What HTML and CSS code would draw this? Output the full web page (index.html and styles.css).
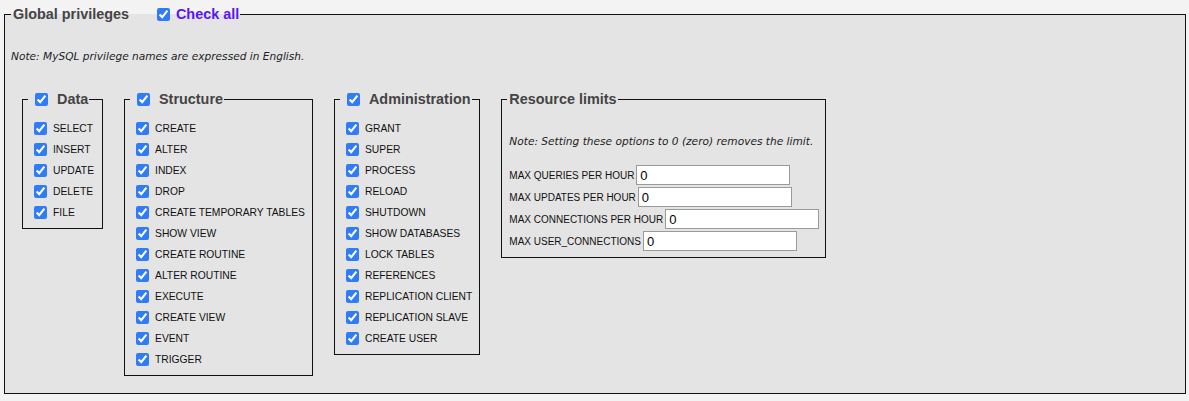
FILE: index.html
```html
<!DOCTYPE html>
<html>
<head>
<meta charset="utf-8">
<link rel="stylesheet" href="styles.css">
</head>
<body>
<fieldset class="outer">
  <legend class="outer-legend">Global privileges<input type="checkbox" class="cb check-all" checked><a class="check-all-link">Check all</a></legend>
  <p class="note">Note: MySQL privilege names are expressed in English.</p>
  <div class="groups">
    <fieldset class="group group-data">
      <legend class="group-legend"><input type="checkbox" class="cb" checked><span>Data</span></legend>
      <div class="items">
        <label class="item"><input type="checkbox" class="cb" checked>SELECT</label>
        <label class="item"><input type="checkbox" class="cb" checked>INSERT</label>
        <label class="item"><input type="checkbox" class="cb" checked>UPDATE</label>
        <label class="item"><input type="checkbox" class="cb" checked>DELETE</label>
        <label class="item"><input type="checkbox" class="cb" checked>FILE</label>
      </div>
    </fieldset>
    <fieldset class="group">
      <legend class="group-legend"><input type="checkbox" class="cb" checked><span>Structure</span></legend>
      <div class="items">
        <label class="item"><input type="checkbox" class="cb" checked>CREATE</label>
        <label class="item"><input type="checkbox" class="cb" checked>ALTER</label>
        <label class="item"><input type="checkbox" class="cb" checked>INDEX</label>
        <label class="item"><input type="checkbox" class="cb" checked>DROP</label>
        <label class="item"><input type="checkbox" class="cb" checked>CREATE TEMPORARY TABLES</label>
        <label class="item"><input type="checkbox" class="cb" checked>SHOW VIEW</label>
        <label class="item"><input type="checkbox" class="cb" checked>CREATE ROUTINE</label>
        <label class="item"><input type="checkbox" class="cb" checked>ALTER ROUTINE</label>
        <label class="item"><input type="checkbox" class="cb" checked>EXECUTE</label>
        <label class="item"><input type="checkbox" class="cb" checked>CREATE VIEW</label>
        <label class="item"><input type="checkbox" class="cb" checked>EVENT</label>
        <label class="item"><input type="checkbox" class="cb" checked>TRIGGER</label>
      </div>
    </fieldset>
    <fieldset class="group">
      <legend class="group-legend"><input type="checkbox" class="cb" checked><span>Administration</span></legend>
      <div class="items">
        <label class="item"><input type="checkbox" class="cb" checked>GRANT</label>
        <label class="item"><input type="checkbox" class="cb" checked>SUPER</label>
        <label class="item"><input type="checkbox" class="cb" checked>PROCESS</label>
        <label class="item"><input type="checkbox" class="cb" checked>RELOAD</label>
        <label class="item"><input type="checkbox" class="cb" checked>SHUTDOWN</label>
        <label class="item"><input type="checkbox" class="cb" checked>SHOW DATABASES</label>
        <label class="item"><input type="checkbox" class="cb" checked>LOCK TABLES</label>
        <label class="item"><input type="checkbox" class="cb" checked>REFERENCES</label>
        <label class="item"><input type="checkbox" class="cb" checked>REPLICATION CLIENT</label>
        <label class="item"><input type="checkbox" class="cb" checked>REPLICATION SLAVE</label>
        <label class="item"><input type="checkbox" class="cb" checked>CREATE USER</label>
      </div>
    </fieldset>
    <fieldset class="group limits">
      <legend class="limits-legend">Resource limits</legend>
      <p class="note limits-note">Note: Setting these options to 0 (zero) removes the limit.</p>
      <div class="limit-rows">
        <label class="limit-row">MAX QUERIES PER HOUR<input type="text" class="limit-input" value="0"></label>
        <label class="limit-row">MAX UPDATES PER HOUR<input type="text" class="limit-input" value="0"></label>
        <label class="limit-row">MAX CONNECTIONS PER HOUR<input type="text" class="limit-input" value="0"></label>
        <label class="limit-row">MAX USER_CONNECTIONS<input type="text" class="limit-input" value="0"></label>
      </div>
    </fieldset>
  </div>
</fieldset>
</body>
</html>
```
FILE: styles.css
```css
html, body {
  background: #f3f3f3;
}
body {
  margin: 0;
  padding: 5px 3px 0 4px;
  font-family: "Liberation Sans", Arial, sans-serif;
  color: #111;
}
.outer {
  margin: 0;
  padding: 0 6px 17px 6px;
  border: 1px solid #111;
  background: #e4e4e4;
  min-width: 0;
}
.outer-legend {
  padding: 0 1px 0 2px;
  font-size: 14.4px;
  font-weight: bold;
  line-height: 18px;
  color: #444;
  display: flex;
  align-items: center;
}
.cb {
  width: 13px;
  height: 13px;
  margin: 0;
  accent-color: #2f7cf6;
  flex: none;
}
.check-all {
  margin-left: 28px;
  margin-right: 6px;
}
.check-all-link {
  color: #5a14f8;
  cursor: pointer;
}
.note {
  margin: 26px 0 0 0;
  font-family: "DejaVu Sans", "Liberation Sans", sans-serif;
  font-size: 10.6px;
  line-height: 14px;
  font-style: italic;
  color: #222;
}
.groups {
  display: flex;
  align-items: flex-start;
  gap: 21px;
  margin: 27px 0 0 11px;
}
.group {
  margin: 0;
  padding: 0 7px 5px 11px;
  border: 1px solid #111;
  min-width: 0;
}
.group-data {
  padding-right: 8px;
}
.group-legend {
  margin-left: -6px;
  margin-right: 0;
  padding: 0 1px 0 0;
  display: flex;
  align-items: center;
  font-size: 14.4px;
  font-weight: bold;
  line-height: 18px;
  color: #444;
}
.group-legend .cb {
  margin-left: 7px;
  margin-right: 9px;
}
.items {
  display: flex;
  flex-direction: column;
  padding-top: 10px;
}
.item {
  display: flex;
  align-items: center;
  gap: 6px;
  height: 21px;
  font-size: 10.3px;
  color: #111;
  white-space: nowrap;
}
.limits {
  padding: 0 6px 5px 7px;
}
.limits-legend {
  margin-left: -2px;
  padding: 0 1px 0 2px;
  font-size: 14.4px;
  font-weight: bold;
  line-height: 18px;
  color: #444;
}
.limits-note {
  margin: 26px 0 16px 0;
  white-space: nowrap;
}
.limit-rows {
  display: flex;
  flex-direction: column;
}
.limit-row {
  display: flex;
  align-items: center;
  gap: 2px;
  height: 22px;
  font-size: 10px;
  white-space: nowrap;
  color: #111;
}
.limit-input {
  box-sizing: border-box;
  width: 154px;
  height: 20px;
  margin: 0;
  padding: 0 3px;
  border: 1px solid #9a9a9a;
  background: #fff;
  font-family: "Liberation Sans", Arial, sans-serif;
  font-size: 13px;
  color: #000;
}
```
